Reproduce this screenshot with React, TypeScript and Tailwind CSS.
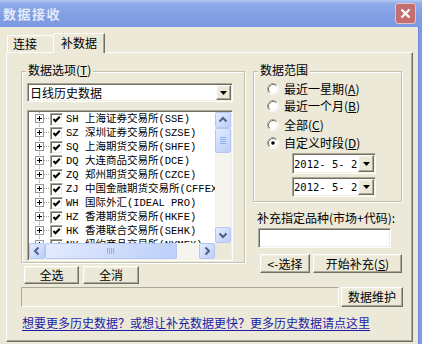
import React from "react";

const raised =
  "border border-t-white border-l-white border-r-[#716f64] border-b-[#716f64] shadow-[inset_-1px_-1px_0_#aca899,inset_1px_1px_0_#f1efe2] bg-[#ece9d8]";
const sunken =
  "border border-t-[#aca899] border-l-[#aca899] border-r-white border-b-white shadow-[inset_1px_1px_0_#716f64,inset_-1px_-1px_0_#f1efe2] p-[1px]";

function Btn({ w, h, children, ml }: { w: string; h: string; children: React.ReactNode; ml?: string }) {
  return (
    <div className={`${w} ${h} ${ml ?? ""} ${raised} flex items-center justify-center leading-[14px] shrink-0`}>
      {children}
    </div>
  );
}

function DropBtn({ w, h }: { w: string; h: string }) {
  return (
    <div className={`${w} ${h} ${raised} flex items-center justify-center shrink-0`}>
      <svg width="7" height="4" viewBox="0 0 7 4">
        <polygon points="0,0 7,0 3.5,4" fill="#000" />
      </svg>
    </div>
  );
}

function Radio({ checked }: { checked?: boolean }) {
  return (
    <svg width="12" height="12" viewBox="0 0 12 12" className="shrink-0">
      <circle cx="6" cy="6" r="5" fill="#fff" />
      <path d="M2.11 9.89 A5.5 5.5 0 0 1 9.89 2.11" stroke="#aca899" fill="none" />
      <path d="M2.82 9.18 A4.5 4.5 0 0 1 9.18 2.82" stroke="#716f64" fill="none" />
      <path d="M9.89 2.11 A5.5 5.5 0 0 1 2.11 9.89" stroke="#fff" fill="none" />
      <path d="M9.18 2.82 A4.5 4.5 0 0 1 2.82 9.18" stroke="#f1efe2" fill="none" />
      {checked && <circle cx="6" cy="6" r="1.8" fill="#000" />}
    </svg>
  );
}

function Check() {
  return (
    <div className={`w-[13px] h-[13px] ${sunken} bg-white shrink-0 flex items-center justify-center`}>
      <svg width="9" height="9" viewBox="0 0 9 9">
        <polyline points="1.5,4 3.5,6.2 7.8,1.8" stroke="#000" strokeWidth="2" fill="none" />
      </svg>
    </div>
  );
}

function TreeConn() {
  return (
    <svg width="15" height="14" viewBox="0 0 15 14" className="shrink-0">
      <line x1="4.5" y1="0" x2="4.5" y2="2.5" stroke="#a0a0a0" strokeDasharray="1 1" />
      <line x1="4.5" y1="11.5" x2="4.5" y2="14" stroke="#a0a0a0" strokeDasharray="1 1" />
      <line x1="9" y1="6.5" x2="15" y2="6.5" stroke="#a0a0a0" strokeDasharray="1 1" />
      <rect x="0.5" y="2.5" width="8" height="8" fill="#fff" stroke="#919b9c" />
      <line x1="2" y1="6.5" x2="7" y2="6.5" stroke="#000" />
      <line x1="4.5" y1="4" x2="4.5" y2="9" stroke="#000" />
    </svg>
  );
}

const lunaBtn =
  "bg-[linear-gradient(135deg,#e3ebfe,#bccff9)] border border-[#b4c8f5] rounded-[2px]";

function Arrow({ dir }: { dir: "up" | "down" | "left" | "right" }) {
  const pts =
    dir === "up"
      ? "3.5,8.5 7,5 10.5,8.5"
      : dir === "down"
      ? "3.5,5.5 7,9 10.5,5.5"
      : dir === "left"
      ? "8.5,3.5 5,7 8.5,10.5"
      : "5.5,3.5 9,7 5.5,10.5";
  return (
    <svg width="14" height="14" viewBox="0 0 14 14">
      <polyline points={pts} stroke="#4d6185" strokeWidth="2" fill="none" />
    </svg>
  );
}

function VBar() {
  return (
    <div className="w-[16px] h-full flex flex-col bg-[#f5f4ee] shrink-0">
      <div className={`h-[16px] ${lunaBtn} flex items-center justify-center shrink-0`}>
        <Arrow dir="up" />
      </div>
      <div className={`h-[25px] ${lunaBtn} flex items-center justify-center shrink-0`}>
        <svg width="6" height="8" viewBox="0 0 6 8">
          {[0, 2, 4, 6].map((y) => (
            <line key={y} x1="0" y1={y + 0.5} x2="6" y2={y + 0.5} stroke="#8cb0f8" />
          ))}
        </svg>
      </div>
      <div className="flex-1" />
      <div className={`h-[16px] ${lunaBtn} flex items-center justify-center shrink-0`}>
        <Arrow dir="down" />
      </div>
    </div>
  );
}

function HBar() {
  return (
    <div className="h-[16px] flex-1 flex bg-[#f5f4ee]">
      <div className={`w-[16px] ${lunaBtn} flex items-center justify-center shrink-0`}>
        <Arrow dir="left" />
      </div>
      <div className={`w-[132px] ${lunaBtn} flex items-center justify-center shrink-0`}>
        <svg width="8" height="6" viewBox="0 0 8 6">
          {[0, 2, 4, 6].map((x) => (
            <line key={x} x1={x + 0.5} y1="0" x2={x + 0.5} y2="6" stroke="#8cb0f8" />
          ))}
        </svg>
      </div>
      <div className="flex-1" />
      <div className={`w-[16px] ${lunaBtn} flex items-center justify-center shrink-0`}>
        <Arrow dir="right" />
      </div>
    </div>
  );
}

const items: [string, string, string][] = [
  ["SH", "上海证券交易所", "(SSE)"],
  ["SZ", "深圳证券交易所", "(SZSE)"],
  ["SQ", "上海期货交易所", "(SHFE)"],
  ["DQ", "大连商品交易所", "(DCE)"],
  ["ZQ", "郑州期货交易所", "(CZCE)"],
  ["ZJ", "中国金融期货交易所", "(CFFEX)"],
  ["WH", "国际外汇", "(IDEAL PRO)"],
  ["HZ", "香港期货交易所", "(HKFE)"],
  ["HK", "香港联合交易所", "(SEHK)"],
  ["NY", "纽约商品交易所", "(NYMEX)"],
];

function U({ c }: { c: string }) {
  return (
    <>
      (<span className="underline underline-offset-1">{c}</span>)
    </>
  );
}

export default function App() {
  return (
    <div className="w-[422px] h-[344px] overflow-hidden bg-[#ece9d8] flex flex-col font-['Noto_Sans_CJK_SC',sans-serif] text-[12px] text-black">
      {/* title bar */}
      <div className="h-[27px] shrink-0 flex items-center justify-between pl-[3px] pr-[6px] bg-[linear-gradient(to_bottom,#b4c8f4_0%,#8fabea_14%,#809ee4_60%,#7d9ae2_100%)]">
        <span className="text-[13px] font-bold text-[#e2eafb] tracking-[1.5px] leading-[16px]">数据接收</span>
        <div className="w-[21px] h-[21px] rounded-[3px] bg-[#c46f6f] border border-[#e6c2c6] flex items-center justify-center">
          <svg width="11" height="11" viewBox="0 0 11 11">
            <path d="M1.5 1.5 L9.5 9.5 M9.5 1.5 L1.5 9.5" stroke="#fff" strokeWidth="2.2" />
          </svg>
        </div>
      </div>

      <div className="flex flex-1">
        <div className="w-[418px] pl-[6px] pt-[6px]">
          {/* tabs */}
          <div className="h-[19px] flex items-end">
            <div className="ml-[1px] w-[46px] h-[17px] border-t border-l border-white rounded-tl-[2px] flex items-center pl-[5px] leading-[14px]">
              连接
            </div>
            <div className="relative z-10 -mb-[1px] w-[52px] h-[20px] bg-[#ece9d8] border-t border-l border-white border-r border-r-[#716f64] shadow-[inset_-1px_0_0_#aca899] rounded-tl-[2px] flex items-center pl-[7px] pb-[2px] leading-[14px]">
              补数据
            </div>
          </div>

          {/* panel */}
          <div className="w-[407px] h-[290px] border border-t-white border-l-white border-r-[#716f64] border-b-[#716f64] shadow-[inset_-1px_-1px_0_#aca899] pl-[14px] pt-[18px]">
            <div className="flex h-[213px]">
              {/* left column */}
              <div className="w-[224px] flex flex-col shrink-0">
                <div className="relative h-[192px] border border-[#c3c0b0] shadow-[inset_1px_1px_0_white,1px_1px_0_white] pl-[5px] pt-[11px]">
                  <div className="absolute left-[4px] top-[-9px] px-[2px] bg-[#ece9d8] leading-[14px]">
                    数据选项<U c="T" />
                  </div>
                  {/* combo */}
                  <div className={`w-[206px] h-[19px] ${sunken} bg-white flex`}>
                    <div className="flex-1 pl-[1px] flex items-center leading-[14px] text-[12px]">日线历史数据</div>
                    <DropBtn w="w-[15px]" h="h-full" />
                  </div>
                  {/* tree list */}
                  <div className={`mt-[8px] w-[206px] h-[151px] ${sunken} bg-white flex flex-col`}>
                    <div className="flex flex-1 min-h-0">
                      <div className="flex-1 overflow-hidden pl-[6px] font-['Liberation_Mono','Noto_Sans_CJK_SC',monospace] text-[10.5px]">
                        {items.map(([code, name, en]) => (
                          <div key={code} className="h-[14px] flex items-center whitespace-nowrap">
                            <TreeConn />
                            <Check />
                            <span className="ml-[3px] leading-[14px]">
                              {code} {name}
                              {en}
                            </span>
                          </div>
                        ))}
                      </div>
                      <VBar />
                    </div>
                    <div className="flex h-[16px] shrink-0">
                      <HBar />
                      <div className="w-[16px] bg-[#ece9d8]" />
                    </div>
                  </div>
                </div>
                <div className="flex mt-[3px]">
                  <Btn w="w-[55px]" h="h-[18px]" ml="ml-[3px]">
                    全选
                  </Btn>
                  <Btn w="w-[56px]" h="h-[18px]" ml="ml-[4px]">
                    全消
                  </Btn>
                </div>
              </div>

              {/* right column */}
              <div className="ml-[8px] w-[149px] flex flex-col shrink-0">
                <div className="relative h-[131px] border border-[#c3c0b0] shadow-[inset_1px_1px_0_white,1px_1px_0_white] pl-[13px] pt-[10px]">
                  <div className="absolute left-[4px] top-[-9px] px-[2px] bg-[#ece9d8] leading-[14px]">数据范围</div>
                  <div className="h-[14px] flex items-center gap-[5px] leading-[14px]">
                    <Radio />
                    <span>
                      最近一星期<U c="A" />
                    </span>
                  </div>
                  <div className="mt-[3px] h-[14px] flex items-center gap-[5px] leading-[14px]">
                    <Radio />
                    <span>
                      最近一个月<U c="B" />
                    </span>
                  </div>
                  <div className="mt-[5px] h-[14px] flex items-center gap-[5px] leading-[14px]">
                    <Radio />
                    <span>
                      全部<U c="C" />
                    </span>
                  </div>
                  <div className="mt-[4px] h-[14px] flex items-center gap-[5px] leading-[14px]">
                    <Radio checked />
                    <span>
                      自定义时段<U c="D" />
                    </span>
                  </div>
                  <div className={`mt-[3px] ml-[25px] w-[84px] h-[21px] ${sunken} bg-white flex`}>
                    <div className="flex-1 flex items-center whitespace-pre font-['DejaVu_Sans_Mono',monospace] text-[10.5px] leading-[14px]">
                      2012- 5- 2
                    </div>
                    <DropBtn w="w-[16px]" h="h-full" />
                  </div>
                  <div className={`mt-[3px] ml-[25px] w-[84px] h-[20px] ${sunken} bg-white flex`}>
                    <div className="flex-1 flex items-center whitespace-pre font-['DejaVu_Sans_Mono',monospace] text-[10.5px] leading-[14px]">
                      2012- 5- 2
                    </div>
                    <DropBtn w="w-[16px]" h="h-full" />
                  </div>
                </div>
                <div className="mt-[9px] ml-[4px] h-[14px] leading-[14px] whitespace-nowrap">补充指定品种(市场+代码):</div>
                <div className={`mt-[3px] ml-[5px] w-[133px] h-[20px] ${sunken} bg-white`} />
                <div className="mt-[6px] flex">
                  <Btn w="w-[50px]" h="h-[19px]" ml="ml-[7px]">
                    &lt;-选择
                  </Btn>
                  <Btn w="w-[89px]" h="h-[19px]" ml="ml-[3px]">
                    <span>
                      开始补充<U c="S" />
                    </span>
                  </Btn>
                </div>
              </div>
            </div>

            {/* bottom row */}
            <div className="mt-[3px] flex h-[20px]">
              <div className="w-[318px] h-[20px] border border-t-[#aca899] border-l-[#aca899] border-r-white border-b-white" />
              <Btn w="w-[62px]" h="h-[20px]" ml="ml-[2px]">
                数据维护
              </Btn>
            </div>
            <div className="mt-[9px] ml-[1px] h-[14px] leading-[14px] text-[#1c1ca8] underline underline-offset-2 whitespace-nowrap">
              想要更多历史数据？或想让补充数据更快？更多历史数据请点这里
            </div>
          </div>
        </div>
        <div className="w-[4px] bg-[#7f9de4] border-l border-[#6a88d6]" />
      </div>
    </div>
  );
}
